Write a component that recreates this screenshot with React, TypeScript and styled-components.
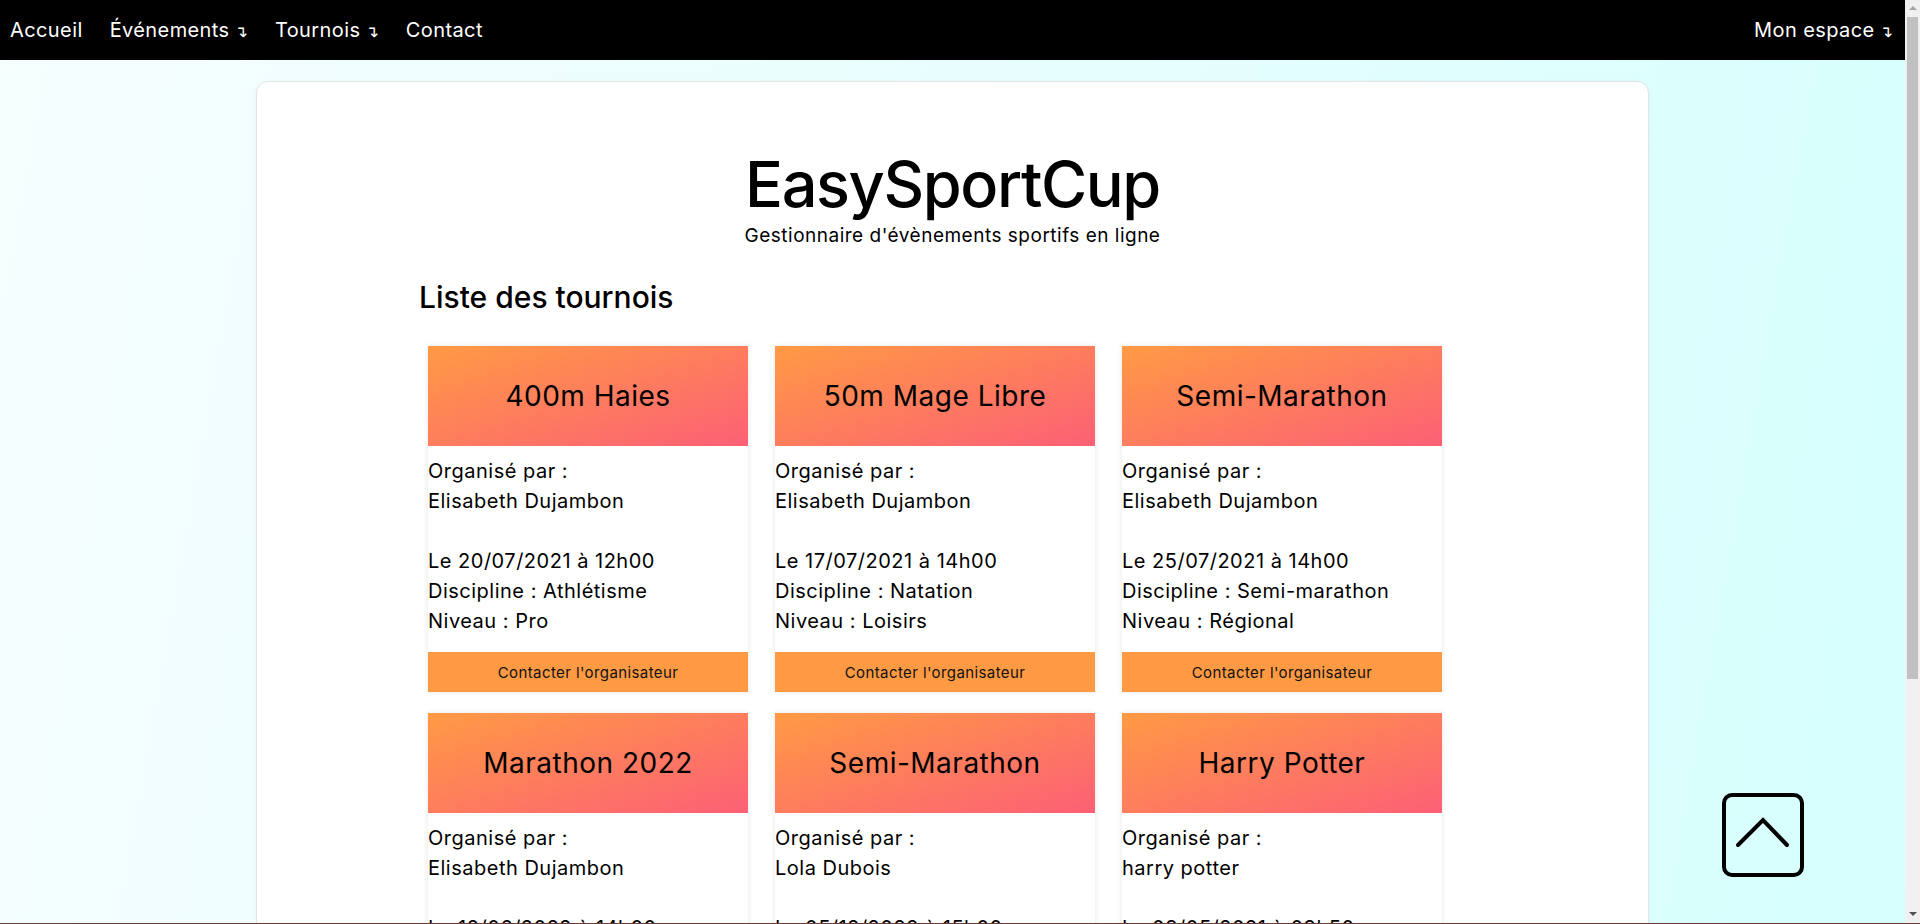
import React from "react";
import styled, { createGlobalStyle } from "styled-components";

const GlobalStyle = createGlobalStyle`
  html, body {
    margin: 0;
    padding: 0;
  }
  body {
    font-family: "Inter", "Noto Sans", sans-serif;
    color: #000;
    background: linear-gradient(100deg, #f6fefe 0%, #e6fefe 55%, #d5fffd 100%);
    background-attachment: fixed;
    min-height: 100vh;
    margin-right: 15px;
  }
  * { box-sizing: border-box; }
`;

const NavBar = styled.nav`
  height: 60px;
  background: #000;
  display: flex;
  align-items: center;
  justify-content: space-between;
  padding: 0 12px 0 10px;
`;

const NavGroup = styled.div`
  display: flex;
  align-items: center;
  gap: 27px;
`;

const NavItem = styled.a`
  color: #fff;
  font-size: 20px;
  letter-spacing: 0.4px;
  text-decoration: none;
  white-space: nowrap;
  display: inline-flex;
  align-items: baseline;
`;

const DropArrow = styled.span`
  font-family: "DejaVu Sans", sans-serif;
  font-size: 16px;
  margin-left: 5px;
  letter-spacing: 0;
`;

const Panel = styled.main`
  width: 1393px;
  margin: 21px auto 40px;
  background: #fff;
  border: 1px solid #e4e4e4;
  border-radius: 12px;
  box-shadow: 0 0 3px rgba(0, 0, 0, 0.04);
  padding: 70px 0 60px;
`;

const Hero = styled.header`
  text-align: center;
`;

const Title = styled.h1`
  margin: 0;
  font-size: 63px;
  line-height: 64px;
  font-weight: 500;
  letter-spacing: -1.4px;
`;

const Subtitle = styled.p`
  margin: 10px 0 0;
  font-size: 19px;
  line-height: 19px;
  letter-spacing: 0.5px;
`;

const Section = styled.section`
  padding-left: 162px;
`;

const SectionTitle = styled.h2`
  margin: 34px 0 31px;
  font-size: 30px;
  line-height: 36px;
  font-weight: 500;
`;

const Grid = styled.div`
  display: grid;
  grid-template-columns: repeat(3, 320px);
  column-gap: 27px;
  row-gap: 21px;
  margin-left: 9px;
`;

const Card = styled.article`
  background: #fff;
  box-shadow: 0 0 6px rgba(0, 0, 0, 0.1);
  display: flex;
  flex-direction: column;
`;

const CardHeader = styled.div`
  height: 100px;
  display: flex;
  align-items: center;
  justify-content: center;
  background: linear-gradient(to right bottom, #ff9a44, #fc6076);
  font-size: 28px;
  letter-spacing: 0.5px;
`;

const CardBody = styled.div`
  padding-top: 10px;
  font-size: 20px;
  line-height: 30px;
  letter-spacing: 0.5px;
`;

const Line = styled.div`
  height: 30px;
  white-space: nowrap;
`;

const ContactButton = styled.button`
  margin-top: 16px;
  height: 40px;
  border: none;
  background: #ff9a44;
  font-family: inherit;
  font-size: 15px;
  letter-spacing: 0.4px;
  color: #111;
  cursor: pointer;
`;

const ScrollTop = styled.button`
  position: fixed;
  right: 116px;
  bottom: 47px;
  width: 82px;
  height: 84px;
  border: 4px solid #000;
  border-radius: 10px;
  background: transparent;
  padding: 0;
  display: block;
  cursor: pointer;
  svg { display: block; }
`;

/* Browser scrollbar as seen in the capture */
const ScrollTrack = styled.div`
  position: fixed;
  top: 0;
  right: 0;
  width: 15px;
  height: 100vh;
  background: #f0f0f0;
  display: flex;
  flex-direction: column;
  align-items: center;
`;

const ScrollArrow = styled.div<{ $down?: boolean; $color: string }>`
  width: 0;
  height: 0;
  margin: ${(p) => (p.$down ? "0 0 8px" : "6px 0 0")};
  border-left: 4px solid transparent;
  border-right: 4px solid transparent;
  ${(p) =>
    p.$down
      ? `border-top: 4px solid ${p.$color};`
      : `border-bottom: 4px solid ${p.$color};`}
`;

const ScrollThumb = styled.div`
  width: 11px;
  height: 662px;
  margin-top: 7px;
  background: #c1c1c1;
`;

const Spacer = styled.div`
  flex: 1;
`;

const WindowEdge = styled.div`
  position: fixed;
  left: 0;
  right: 0;
  bottom: 0;
  height: 1px;
  background: #6e3a3a;
`;

type Tournament = {
  name: string;
  organizer: string;
  date: string;
  discipline: string;
  level: string;
};

const tournaments: Tournament[] = [
  { name: "400m Haies", organizer: "Elisabeth Dujambon", date: "Le 20/07/2021 à 12h00", discipline: "Athlétisme", level: "Pro" },
  { name: "50m Mage Libre", organizer: "Elisabeth Dujambon", date: "Le 17/07/2021 à 14h00", discipline: "Natation", level: "Loisirs" },
  { name: "Semi-Marathon", organizer: "Elisabeth Dujambon", date: "Le 25/07/2021 à 14h00", discipline: "Semi-marathon", level: "Régional" },
  { name: "Marathon 2022", organizer: "Elisabeth Dujambon", date: "Le 12/06/2022 à 14h00", discipline: "Marathon", level: "Pro" },
  { name: "Semi-Marathon", organizer: "Lola Dubois", date: "Le 05/12/2022 à 15h00", discipline: "Semi-marathon", level: "Loisirs" },
  { name: "Harry Potter", organizer: "harry potter", date: "Le 03/05/2021 à 09h50", discipline: "Quidditch", level: "Pro" },
];

export default function App() {
  return (
    <>
      <GlobalStyle />
      <NavBar>
        <NavGroup>
          <NavItem href="#">Accueil</NavItem>
          <NavItem href="#">Événements<DropArrow>↴</DropArrow></NavItem>
          <NavItem href="#">Tournois<DropArrow>↴</DropArrow></NavItem>
          <NavItem href="#">Contact</NavItem>
        </NavGroup>
        <NavItem href="#">Mon espace<DropArrow>↴</DropArrow></NavItem>
      </NavBar>
      <Panel>
        <Hero>
          <Title>EasySportCup</Title>
          <Subtitle>Gestionnaire d'évènements sportifs en ligne</Subtitle>
        </Hero>
        <Section>
          <SectionTitle>Liste des tournois</SectionTitle>
          <Grid>
            {tournaments.map((t, i) => (
              <Card key={i}>
                <CardHeader>{t.name}</CardHeader>
                <CardBody>
                  <Line>Organisé par :</Line>
                  <Line>{t.organizer}</Line>
                  <Line />
                  <Line>{t.date}</Line>
                  <Line>Discipline : {t.discipline}</Line>
                  <Line>Niveau : {t.level}</Line>
                </CardBody>
                <ContactButton>Contacter l'organisateur</ContactButton>
              </Card>
            ))}
          </Grid>
        </Section>
      </Panel>
      <ScrollTop aria-label="Haut de page">
        <svg width="74" height="76" viewBox="4 4 74 76">
          <path d="M16 52 L41 27 L65 52" fill="none" stroke="#000" strokeWidth="4" strokeLinecap="round" strokeLinejoin="miter" />
        </svg>
      </ScrollTop>
      <ScrollTrack aria-hidden="true">
        <ScrollArrow $color="#a3a3a3" />
        <ScrollThumb />
        <Spacer />
        <ScrollArrow $down $color="#505050" />
      </ScrollTrack>
      <WindowEdge />
    </>
  );
}
